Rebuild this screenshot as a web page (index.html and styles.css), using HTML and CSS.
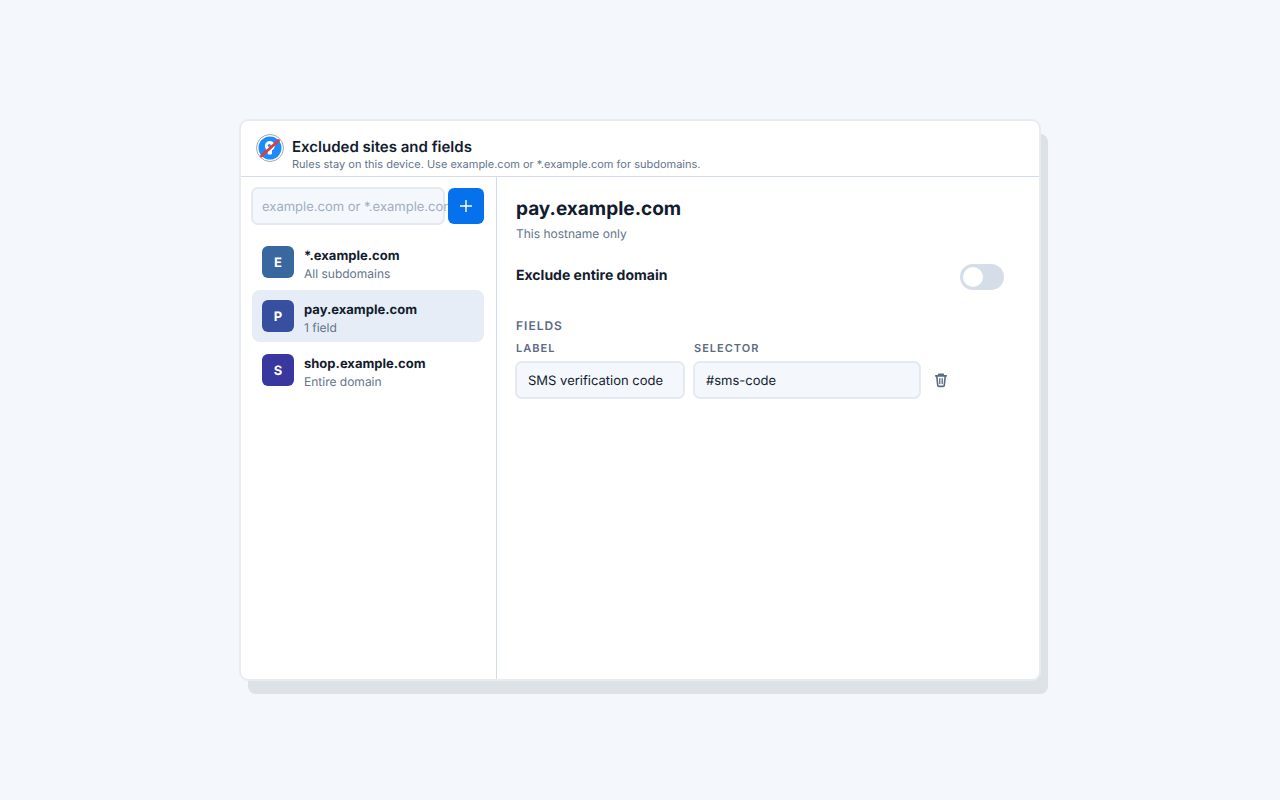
FILE: index.html
```html
<!DOCTYPE html>
<html lang="en">
<head>
<meta charset="utf-8">
<meta name="viewport" content="width=device-width, initial-scale=1">
<title>Excluded sites and fields</title>
<link rel="stylesheet" href="styles.css">
</head>
<body>
<div class="panel">
  <header class="header">
    <svg class="logo" viewBox="0 0 28 28" aria-hidden="true">
      <circle cx="14" cy="14" r="13.5" fill="#fff" stroke="#a3a8af" stroke-width="1"/>
      <circle cx="14" cy="14" r="11.5" fill="#1a8cff"/>
      <circle cx="13.8" cy="12" r="4.9" fill="#fff"/>
      <path d="M11.6 14h4.4v5.4q0 1-1 1h-2.4q-1 0-1-1z" fill="#fff"/>
      <circle cx="13.4" cy="11.6" r="1.5" fill="#1a8cff"/>
      <path d="M5.4 22 22.6 6.4" stroke="#e53a35" stroke-width="2.7" stroke-linecap="round"/>
    </svg>
    <div class="heading">
      <h1 class="title">Excluded sites and fields</h1>
      <p class="subtitle">Rules stay on this device. Use example.com or *.example.com for subdomains.</p>
    </div>
  </header>
  <div class="content">
    <aside class="sidebar">
      <form class="add-form">
        <div class="domain-box">
          <input class="domain-input" type="text" aria-label="Domain" placeholder="example.com or *.example.com">
        </div>
        <button class="add-button" type="button" aria-label="Add domain">
          <svg class="plus" viewBox="0 0 12 12" aria-hidden="true"><path d="M6 0v12M0 6h12" stroke="#fff" stroke-width="1.4"/></svg>
        </button>
      </form>
      <nav class="sites" aria-label="Excluded sites">
        <button class="site" type="button">
          <span class="avatar avatar-e">E</span>
          <span class="site-text"><span class="site-name">*.example.com</span><span class="site-note">All subdomains</span></span>
        </button>
        <button class="site selected" type="button" aria-current="true">
          <span class="avatar avatar-p">P</span>
          <span class="site-text"><span class="site-name">pay.example.com</span><span class="site-note">1 field</span></span>
        </button>
        <button class="site" type="button">
          <span class="avatar avatar-s">S</span>
          <span class="site-text"><span class="site-name">shop.example.com</span><span class="site-note">Entire domain</span></span>
        </button>
      </nav>
    </aside>
    <main class="detail">
      <h2 class="domain">pay.example.com</h2>
      <p class="scope">This hostname only</p>
      <div class="toggle-row">
        <label class="toggle-label" for="entire">Exclude entire domain</label>
        <input class="switch" type="checkbox" role="switch" id="entire">
      </div>
      <h3 class="section">FIELDS</h3>
      <div class="fields">
        <div class="field">
          <label class="field-label" for="label">LABEL</label>
          <input class="field-input" id="label" type="text" value="SMS verification code">
        </div>
        <div class="field">
          <label class="field-label" for="selector">SELECTOR</label>
          <input class="field-input" id="selector" type="text" value="#sms-code">
        </div>
        <button class="delete" type="button" aria-label="Delete field">
          <svg class="trash" viewBox="0 0 14 16" fill="none" stroke="#5b6b82" stroke-width="1.6" stroke-linecap="round" stroke-linejoin="round" aria-hidden="true">
            <path d="M1.7 3.9h10.6M4.8 3.4V2.2h4.4v1.2M2.8 4.4l.9 8.8q.1 1.2 1.3 1.2h4q1.2 0 1.3-1.2l.9-8.8"/>
            <path d="M5.8 6.6v5M8.2 6.6v5" stroke-width="1.3"/>
          </svg>
        </button>
      </div>
    </main>
  </div>
</div>
</body>
</html>
```
FILE: styles.css
```css
* { box-sizing: border-box; }

body {
  margin: 0;
  min-height: 100vh;
  padding: 24px;
  display: flex;
  align-items: center;
  justify-content: center;
  background: #f4f7fc;
  color: #131c2e;
  font-family: Inter, "Liberation Sans", sans-serif;
  text-rendering: geometricPrecision;
}

h1, h2, h3, p { margin: 0; }

button, input { font: inherit; color: inherit; text-rendering: inherit; }

.panel {
  flex: 1;
  max-width: 802px;
  min-height: 562px;
  display: flex;
  flex-direction: column;
  background: #fff;
  border: 2px solid #e7ecf3;
  border-radius: 9px;
  box-shadow: 8px 14px 0 -1px #dde2e7;
}

.header {
  display: flex;
  gap: 8px;
  padding: 13px 15px 4px;
  border-bottom: 1px solid #d3dce8;
}

.logo { width: 28px; height: 28px; }

.heading { padding-top: 3px; }

.title { font-size: 15px; line-height: 19px; font-weight: 600; }

.subtitle { font-size: 11px; line-height: 16px; color: #64748b; }

.content { flex: 1; display: grid; grid-template-columns: 256px 1fr; }

.sidebar { padding: 10px 12px 10px 10px; border-right: 1px solid #d3dce8; }

.add-form { display: flex; align-items: center; gap: 3px; }

.domain-box {
  flex: 1;
  min-width: 0;
  display: flex;
  height: 38px;
  background: #f4f7fc;
  border: 2px solid #e4eaf2;
  border-radius: 7px;
}

.domain-input {
  flex: 1;
  min-width: 0;
  margin-right: -12px;
  padding: 2px 0 0 9px;
  border: 0;
  outline: 0;
  background: none;
  font-size: 13px;
}

.domain-input::placeholder { color: #a1aebf; opacity: 1; }

.add-button {
  position: relative;
  width: 36px;
  height: 36px;
  padding: 0;
  display: grid;
  place-items: center;
  border: 0;
  border-radius: 6px;
  background: #0571ed;
}

.plus { width: 12px; height: 12px; }

.sites {
  display: flex;
  flex-direction: column;
  gap: 2px;
  padding: 11px 0 0 1px;
}

.site {
  display: flex;
  align-items: center;
  gap: 10px;
  height: 52px;
  padding: 0 10px;
  border: 0;
  border-radius: 8px;
  background: none;
  text-align: left;
}

.selected { background: #e6edf6; }

.avatar {
  width: 32px;
  height: 32px;
  padding-top: 2px;
  display: grid;
  place-items: center;
  border-radius: 6px;
  color: #fff;
  font-size: 13px;
  font-weight: 700;
}

.avatar-e { background: #38689f; }
.avatar-p { background: #384f9f; }
.avatar-s { background: #38389f; }

.site-text { display: flex; flex-direction: column; padding-top: 5px; }

.site-name { font-size: 13px; line-height: 18px; font-weight: 700; }

.site-note { font-size: 12px; line-height: 18px; color: #64748b; }

.detail { padding: 18px 35px 18px 19px; }

.domain { font-size: 19px; line-height: 28px; font-weight: 700; }

.scope { padding-top: 2px; font-size: 12px; line-height: 18px; color: #64748b; }

.toggle-row {
  display: flex;
  align-items: flex-start;
  justify-content: space-between;
  margin-top: 21px;
}

.toggle-label { font-size: 14px; line-height: 24px; font-weight: 700; }

.switch {
  appearance: none;
  display: flex;
  width: 44px;
  height: 26px;
  margin: 0;
  padding: 3px;
  border-radius: 13px;
  background: #d5dde9;
}

.switch::before {
  content: "";
  width: 20px;
  height: 20px;
  border-radius: 50%;
  background: #fff;
}

.switch:checked { justify-content: flex-end; background: #0571ed; }

.section {
  margin-top: 28px;
  font-size: 12px;
  line-height: 16px;
  font-weight: 600;
  letter-spacing: 1px;
  color: #5b6b82;
}

.fields {
  display: grid;
  grid-template-columns: 85fr 114fr 24px;
  gap: 8px;
  max-width: 438px;
  margin: 6px 0 0 -1px;
}

.field { display: flex; flex-direction: column; gap: 5px; min-width: 0; }

.field-label {
  padding-left: 1px;
  font-size: 11px;
  line-height: 16px;
  font-weight: 600;
  letter-spacing: 1px;
  color: #5b6b82;
}

.field-input {
  width: 100%;
  height: 38px;
  padding: 2px 11px 0;
  border: 2px solid #e4eaf2;
  border-radius: 7px;
  background: #f4f7fc;
  font-size: 13px;
}

.delete {
  align-self: end;
  height: 38px;
  padding: 0;
  display: grid;
  place-items: center;
  border: 0;
  background: none;
}

.trash { width: 14px; height: 16px; }
```
